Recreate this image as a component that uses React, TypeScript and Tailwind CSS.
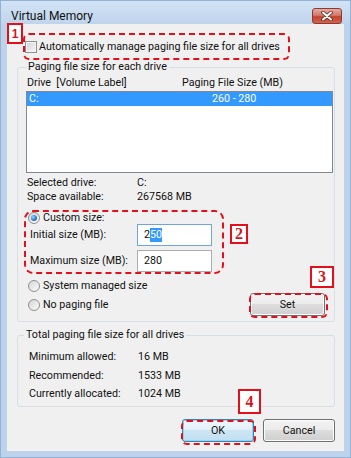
import type { ReactNode } from "react";
import clsx from "clsx";

const cn = clsx;

function Radio({ checked = false }: { checked?: boolean }) {
  return (
    <span className="flex h-[12px] w-[12px] shrink-0 items-center justify-center rounded-full border border-[#8e8f8f] bg-[linear-gradient(135deg,#d6d6d6,#fbfbfb)]">
      {checked && (
        <span className="h-[6px] w-[6px] rounded-full bg-[radial-gradient(circle_at_35%_35%,#9fd6fb,#2b73c4_60%,#1c4f8f)]" />
      )}
    </span>
  );
}

function Button({ label, primary = false }: { label: string; primary?: boolean }) {
  return (
    <div
      className={cn(
        "flex h-[23px] w-[72px] shrink-0 items-center justify-center rounded-[3px] border",
        primary
          ? "border-[#3c7fb1] bg-[linear-gradient(#f1f8fd,#e0eff8_50%,#cde6f4_50%,#c1dff1)] shadow-[inset_0_0_0_1px_#8fd6f6]"
          : "border-[#707070] bg-[linear-gradient(#f2f2f2,#ebebeb_50%,#dddddd_50%,#cfcfcf)] shadow-[inset_0_0_0_1px_#fcfcfc]",
      )}
    >
      {label}
    </div>
  );
}

function Row({ label, value, className }: { label: string; value: string; className?: string }) {
  return (
    <div className={cn("flex h-[14px] items-center", className)}>
      <span className="w-[110px] shrink-0">{label}</span>
      <span>{value}</span>
    </div>
  );
}

function Badge({ n, className, small = false }: { n: string; className: string; small?: boolean }) {
  return (
    <div
      className={cn(
        "absolute flex items-center justify-center border-2 border-[#e3101c] bg-white font-bold leading-none text-[#d8141e]",
        small ? "font-[family-name:'Liberation_Sans',sans-serif] text-[12px]" : "font-[family-name:'Liberation_Serif',serif] text-[16px]",
        className,
      )}
    >
      {n}
    </div>
  );
}

function Outline({ className }: { className: string }) {
  return <div className={cn("pointer-events-none absolute rounded-[6px] border-2 border-dashed border-[#e3101c]", className)} />;
}

function Group({ title, children, className }: { title: string; children: ReactNode; className?: string }) {
  return (
    <fieldset className={cn("ml-[10px] w-[318px] rounded-[3px] border border-[#d5dfe5]", className)}>
      <legend className="h-[14px] px-[2px] leading-[14px]">{title}</legend>
      {children}
    </fieldset>
  );
}

export default function App() {
  return (
    <div className="relative flex h-[458px] w-[351px] flex-col overflow-hidden border border-[#93b3d6] bg-[#bcd3eb] font-[family-name:Roboto,'Noto_Sans',sans-serif] text-[10.7px] leading-[14px] text-[#111]">
      {/* title bar */}
      <div className="flex h-[23px] shrink-0 items-center bg-[linear-gradient(#d2e3f5,#bfd5ec)] pl-[10px] pr-[8px] pt-[6px]">
        <span className="text-[12px]">Virtual Memory</span>
        <div className="ml-auto flex h-[16px] w-[30px] items-center justify-center rounded-[3px] border border-[#8d3a32] bg-[linear-gradient(#e7aaa1,#d4786c_45%,#c3422f_55%,#d0654b)]">
          <svg width="12" height="10" viewBox="0 0 12 10">
            <path d="M2 1.5 L10 8.5 M10 1.5 L2 8.5" stroke="#5b2a24" strokeWidth="3.6" strokeLinecap="round" />
            <path d="M2 1.5 L10 8.5 M10 1.5 L2 8.5" stroke="#ffffff" strokeWidth="2" strokeLinecap="round" />
          </svg>
        </div>
      </div>

      {/* client area */}
      <div className="mx-[6px] mb-[6px] flex flex-1 flex-col bg-[#f0f0f0]">
        <div className="mt-[16px] flex h-[14px] items-center gap-[2px] pl-[18px]">
          <span className="h-[12px] w-[12px] border border-[#8e8f8f] bg-[linear-gradient(135deg,#d0d3d8,#f7f7f7)] shadow-[inset_0_0_0_1px_#f4f4f4]" />
          <span>Automatically manage paging file size for all drives</span>
        </div>

        <Group title="Paging file size for each drive" className="mt-[6px] pb-[5px] pl-[8px] pr-[1px]">
          <div className="mt-[2px] flex h-[14px] items-center pl-[1px]">
            <span className="w-[155px] shrink-0 whitespace-pre">Drive  [Volume Label]</span>
            <span>Paging File Size (MB)</span>
          </div>
          <div className="mt-[1px] h-[82px] border border-[#828790] bg-white">
            <div className="flex h-[14px] items-center bg-[#3399ff] pl-[2px] text-white">
              <span className="w-[183px] shrink-0">C:</span>
              <span>260 - 280</span>
            </div>
          </div>
          <Row label="Selected drive:" value="C:" className="mt-[3px] pl-[1px]" />
          <Row label="Space available:" value="267568 MB" className="pl-[1px]" />

          <div className="mt-[7px] flex h-[14px] items-center gap-[3px] pl-[2px]">
            <Radio checked />
            <span>Custom size:</span>
          </div>
          <div className="mt-[-1px] flex h-[22px] items-center pl-[4px]">
            <span className="w-[107px] shrink-0">Initial size (MB):</span>
            <div className="flex h-[22px] w-[75px] items-center border border-[#6ea5dd] bg-white pl-[6px]">
              <span>2</span>
              <span className="bg-[#3399ff] text-white">50</span>
            </div>
          </div>
          <div className="mt-[4px] flex h-[22px] items-center pl-[4px]">
            <span className="w-[107px] shrink-0">Maximum size (MB):</span>
            <div className="flex h-[22px] w-[75px] items-center border border-[#abadb3] bg-white pl-[6px]">280</div>
          </div>

          <div className="mt-[7px] flex h-[14px] items-center gap-[3px] pl-[2px]">
            <Radio />
            <span>System managed size</span>
          </div>
          <div className="flex h-[23px] items-center gap-[3px] pl-[2px] pr-[8px]">
            <Radio />
            <span>No paging file</span>
            <div className="ml-auto">
              <div className="flex h-[23px] w-[75px] items-center justify-center rounded-[3px] border border-[#707070] bg-[linear-gradient(#f2f2f2,#ebebeb_50%,#dddddd_50%,#cfcfcf)] shadow-[inset_0_0_0_1px_#fcfcfc]">
                Set
              </div>
            </div>
          </div>
        </Group>

        <Group title="Total paging file size for all drives" className="mt-[6px] pb-[5px] pl-[11px] [&>legend]:-ml-[5px]">
          <Row label="Minimum allowed:" value="16 MB" className="mt-[8px] [&>span:first-child]:w-[109px]" />
          <Row label="Recommended:" value="1533 MB" className="mt-[5px] [&>span:first-child]:w-[109px]" />
          <Row label="Currently allocated:" value="1024 MB" className="mt-[4px] [&>span:first-child]:w-[109px]" />
        </Group>

        <div className="mt-[12px] flex justify-end gap-[9px] pr-[9px]">
          <Button label="OK" primary />
          <Button label="Cancel" />
        </div>
      </div>

      {/* annotations */}
      <Outline className="left-[22px] top-[32px] h-[27px] w-[267px]" />
      <Outline className="left-[23px] top-[209px] h-[64px] w-[200px] rounded-[9px]" />
      <Outline className="left-[248px] top-[292px] h-[25px] w-[79px]" />
      <Outline className="left-[180px] top-[419px] h-[25px] w-[75px]" />
      <Badge n="1" small className="left-[6px] top-[22px] h-[21px] w-[16px]" />
      <Badge n="2" className="left-[229px] top-[223px] h-[20px] w-[18px] text-[13px]" />
      <Badge n="3" className="left-[309px] top-[265px] h-[22px] w-[24px]" />
      <Badge n="4" className="left-[237px] top-[388px] h-[25px] w-[23px]" />
    </div>
  );
}
